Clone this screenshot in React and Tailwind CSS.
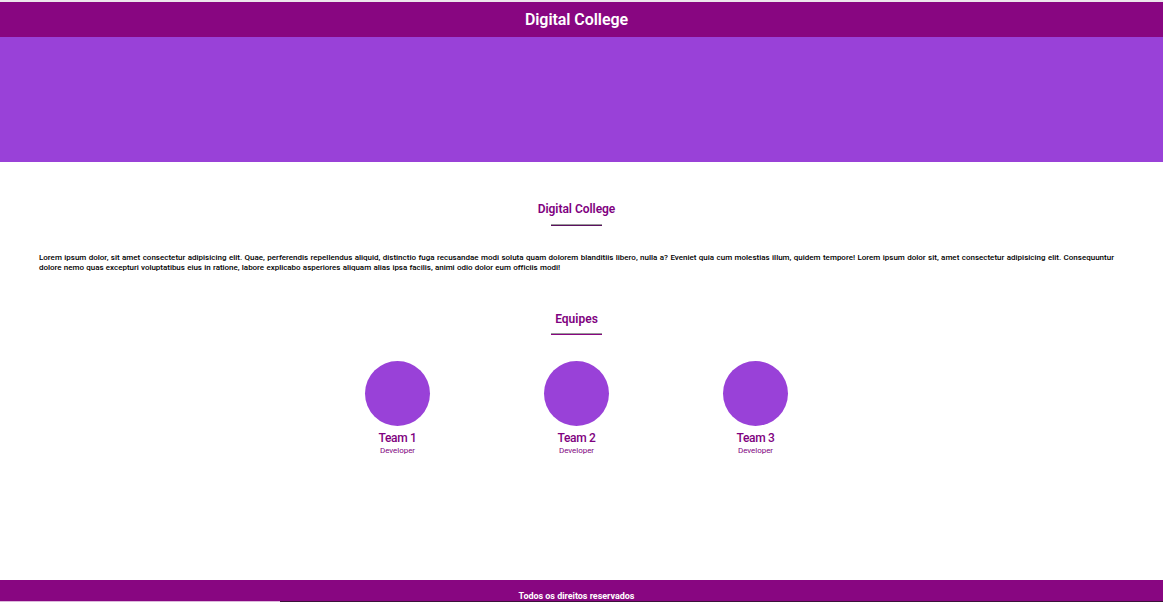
const TEAMS = ['Team 1', 'Team 2', 'Team 3'];

function SectionTitle({ children, line, offset }) {
  return (
    <div className="flex flex-col items-center">
      <h2 className={`h-[16px] text-[12px] font-semibold text-[#800080] ${offset}`}>{children}</h2>
      <div className={`mt-[7px] h-[2px] w-[51px] border-t ${line}`} />
    </div>
  );
}

export default function App() {
  return (
    <div className="flex h-[602px] w-[1163px] flex-col overflow-hidden bg-white font-['Roboto',sans-serif]">
      <header className="h-[37px] border-t-2 border-[#ece6ec] bg-[#880681] pr-[10px] pt-[7px] text-center">
        <h1 className="text-[16px] leading-[22px] font-semibold tracking-[-0.06px] text-white">Digital College</h1>
      </header>
      <div className="h-[125px] bg-[#9941d8]" />
      <main className="flex h-[418px] w-[1153px] flex-col pt-[39px]">
        <SectionTitle line="border-[#999] bg-[#5c1060]" offset="leading-[16px] tracking-[-0.03px]">Digital College</SectionTitle>
        <div className="mt-[27px] ml-[39px] w-[1075px] text-[8px] leading-[10px] font-medium text-black">
          <p className="[text-align-last:justify] whitespace-nowrap">
            Lorem ipsum dolor, sit amet consectetur adipisicing elit. Quae, perferendis repellendus aliquid, distinctio fuga recusandae modi soluta quam dolorem blanditiis libero, nulla a? Eveniet quia cum molestias illum, quidem tempore! Lorem ipsum dolor sit, amet consectetur adipisicing elit. Consequuntur
          </p>
          <p className="w-[521px] tracking-[-0.03px] [text-align-last:justify] whitespace-nowrap">
            dolore nemo quas excepturi voluptatibus eius in ratione, labore explicabo asperiores aliquam alias ipsa facilis, animi odio dolor eum officiis modi!
          </p>
        </div>
        <div className="mt-[37px]">
          <SectionTitle line="border-[#999] bg-[#880681]" offset="leading-[18px]">Equipes</SectionTitle>
        </div>
        <div className="mt-[26px] flex justify-center gap-[114px]">
          {TEAMS.map((name) => (
            <div key={name} className="flex w-[65px] flex-col items-center text-[#800080]">
              <div className="size-[65px] rounded-full bg-[#9941d8]" />
              <h3 className="mt-[4px] text-[12px] leading-[16px] font-medium tracking-[-0.3px]">{name}</h3>
              <p className="text-[8px] leading-[9px] tracking-[-0.05px]">Developer</p>
            </div>
          ))}
        </div>
      </main>
      <footer className="h-[21px] bg-[#880681] pr-[10px] pt-[11px] text-center text-[9px] leading-[10px] font-bold tracking-[-0.03px] text-white">
        Todos os direitos reservados
      </footer>
      <div className="flex h-[1px] bg-[#3a1138]">
        <div className="w-[280px] bg-[#dcb8dc]" />
      </div>
    </div>
  );
}
